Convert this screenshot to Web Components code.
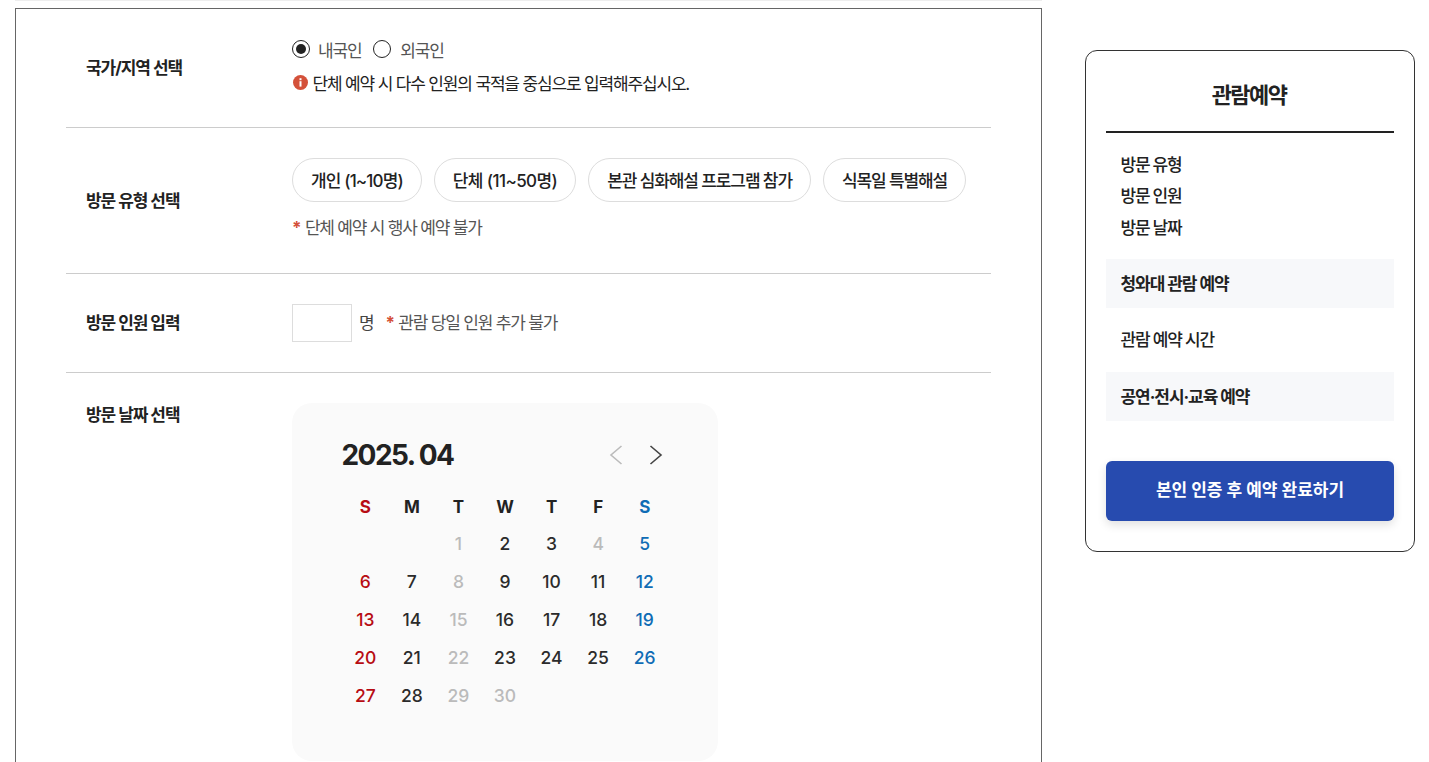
<!DOCTYPE html>
<html lang="ko">
<head>
<meta charset="utf-8">
<title>관람예약</title>
<style>
  html, body { margin: 0; height: 100%; overflow: hidden; background: #fff; }
  body { font-family: "Inter", "Noto Sans CJK KR", sans-serif; color: #222; }
</style>
</head>
<body>
<reserve-page>
  <reserve-form>
    <form-row label="국가/지역 선택" height="119" pad="0" center>
      <nation-picker></nation-picker>
    </form-row>
    <form-row label="방문 유형 선택" pad="0" height="146" center>
      <visit-types></visit-types>
    </form-row>
    <form-row label="방문 인원 입력" pad="30px 0" center>
      <people-input></people-input>
    </form-row>
    <form-row label="방문 날짜 선택" pad="30px 0 0" last>
      <date-calendar></date-calendar>
    </form-row>
  </reserve-form>
  <reserve-summary></reserve-summary>
</reserve-page>

<script>
const FONT = '"Inter", "Noto Sans CJK KR", sans-serif'

class ReservePage extends HTMLElement {
  constructor () {
    super()
    this.attachShadow({ mode: 'open' }).innerHTML = `
      <style>
        :host { display: flex; align-items: flex-start; padding: 8px 14px 0 15px; gap: 43px; box-sizing: border-box; width: 1429px; height: 762px; overflow: hidden; position: relative; }
        .strip { position: absolute; left: 15px; top: 0; width: 1027px; height: 1px; background: #eee; }
      </style>
      <div class="strip"></div>
      <slot></slot>
    `
  }
}

class ReserveForm extends HTMLElement {
  constructor () {
    super()
    this.attachShadow({ mode: 'open' }).innerHTML = `
      <style>
        :host { display: block; flex: none; width: 1027px; box-sizing: border-box; border: 1px solid #666; padding: 0 50px; height: 900px; }
      </style>
      <slot></slot>
    `
  }
}

class FormRow extends HTMLElement {
  constructor () {
    super()
    const center = this.hasAttribute('center')
    const last = this.hasAttribute('last')
    const height = this.getAttribute('height')
    this.attachShadow({ mode: 'open' }).innerHTML = `
      <style>
        :host { display: flex; align-items: ${center ? 'center' : 'flex-start'}; box-sizing: border-box; padding: ${this.getAttribute('pad')}; ${last ? '' : 'border-bottom: 1px solid #ccc;'} ${height ? `height: ${height + 'px'};` : ''} font-family: ${FONT}; }
        .label { flex: none; width: 226px; padding-left: 20px; box-sizing: border-box; font-size: 17px; font-weight: 700; letter-spacing: -1.05px; line-height: 24px; color: #222; }
        .value { flex: 1; min-width: 0; }
      </style>
      <div class="label">${this.getAttribute('label')}</div>
      <div class="value"><slot></slot></div>
    `
  }
}

class NationPicker extends HTMLElement {
  constructor () {
    super()
    this.attachShadow({ mode: 'open' }).innerHTML = `
      <style>
        :host { display: block; font-size: 17px; letter-spacing: -1.1px; color: #555; font-family: ${FONT}; margin-bottom: 5px; }
        .radios { display: flex; align-items: center; height: 24px; }
        .radio { display: flex; align-items: center; gap: 8px; margin-right: 11.5px; }
        .radio + .radio { gap: 9px; }
        .dot { width: 18px; height: 18px; box-sizing: border-box; border: 1px solid #222; border-radius: 50%; display: flex; align-items: center; justify-content: center; }
        .dot i { width: 10px; height: 10px; background: #222; border-radius: 50%; }
        .notice { display: flex; align-items: center; gap: 5px; margin-top: 9px; height: 24px; color: #222; letter-spacing: -1.16px; margin-left: 1px; }
        svg { display: block; margin-top: 1px; }
        .notice span { margin-left: -0.5px; }
      </style>
      <div class="radios">
        <div class="radio"><span class="dot"><i></i></span>내국인</div>
        <div class="radio"><span class="dot"></span>외국인</div>
      </div>
      <div class="notice">
        <svg width="15" height="15" viewBox="0 0 15 15"><circle cx="7.5" cy="7.5" r="7.5" fill="#d4513a"/><rect x="6.5" y="3.2" width="2" height="2" fill="#fff"/><rect x="6.5" y="6.2" width="2" height="5.4" fill="#fff"/></svg>
        <span>단체 예약 시 다수 인원의 국적을 중심으로 입력해주십시오.</span>
      </div>
    `
  }
}

class VisitTypes extends HTMLElement {
  constructor () {
    super()
    const types = [['개인 (1~10명)', '-0.86px'], ['단체 (11~50명)', '-0.6px'], ['본관 심화해설 프로그램 참가', '-1.1px'], ['식목일 특별해설', '-1.1px']]
    this.attachShadow({ mode: 'open' }).innerHTML = `
      <style>
        :host { display: block; font-family: ${FONT}; height: 85px; }
        .list { display: flex; gap: 12px; }
        .chip { height: 44px; box-sizing: border-box; border: 1px solid #ddd; border-radius: 22px; padding: 0 18px 2px; display: flex; align-items: center; font-size: 17px; font-weight: 500; color: #222; white-space: nowrap; }
        .note { margin-top: 14px; line-height: 24px; font-size: 17px; letter-spacing: -1.2px; color: #555; }
        .note b { color: #d4513a; font-weight: 700; margin-right: 1px; }
      </style>
      <div class="list">${types.map(t => `<div class="chip" style="letter-spacing: ${t[1]}">${t[0]}</div>`).join('')}</div>
      <div class="note"><b>*</b> 단체 예약 시 행사 예약 불가</div>
    `
  }
}

class PeopleInput extends HTMLElement {
  constructor () {
    super()
    this.attachShadow({ mode: 'open' }).innerHTML = `
      <style>
        :host { display: flex; align-items: center; font-family: ${FONT}; font-size: 17px; letter-spacing: -1.2px; color: #555; }
        .box { width: 60px; height: 38px; box-sizing: border-box; border: 1px solid #ddd; background: #fff; }
        span { margin-bottom: 3px; }
        .unit { margin-left: 7px; color: #444; }
        .note { margin-left: 12px; }
        .note b { color: #d4513a; font-weight: 700; margin-right: 1px; }
      </style>
      <div class="box"></div>
      <span class="unit">명</span>
      <span class="note"><b>*</b> 관람 당일 인원 추가 불가</span>
    `
  }
}

class DateCalendar extends HTMLElement {
  constructor () {
    super()
    const heads = ['S', 'M', 'T', 'W', 'T', 'F', 'S']
    const off = [1, 4, 8, 15, 22, 29, 30]
    let cells = '<i></i><i></i>'
    for (let d = 1; d <= 30; d++) {
      const col = (d + 1) % 7
      let cls = ''
      if (col === 0) cls = 'sun'
      if (col === 6) cls = 'sat'
      if (off.includes(d)) cls = 'off'
      cells += `<span class="${cls}">${d}</span>`
    }
    this.attachShadow({ mode: 'open' }).innerHTML = `
      <style>
        :host { display: block; width: 426px; height: 358px; box-sizing: border-box; background: #fafafa; border-radius: 20px; padding: 33px 50px 0; font-family: "Inter", sans-serif; }
        .top { display: flex; align-items: center; justify-content: space-between; height: 38px; }
        .ym { font-size: 28px; font-weight: 700; letter-spacing: -1.55px; color: #222; margin-left: -0.5px; }
        .nav { display: flex; gap: 26px; margin-right: 5px; }
        svg { display: block; }
        .grid { display: grid; grid-template-columns: repeat(7, 1fr); grid-auto-rows: 38px; margin-top: 13px; text-align: center; font-size: 17.5px; font-weight: 500; line-height: 38px; color: #2b2b2b; }
        .head { font-weight: 700; font-size: 17px; line-height: 40px; color: #222; }
        .sun { color: #b70c13; }
        .sat { color: #0f6cb5; }
        .off { color: #bbb; }
      </style>
      <div class="top">
        <div class="ym">2025. 04</div>
        <div class="nav">
          <svg width="14" height="20" viewBox="0 0 14 20" fill="none" stroke="#bbb" stroke-width="1.6"><path d="M12.5 1 2 10l10.500 9"/></svg>
          <svg width="14" height="20" viewBox="0 0 14 20" fill="none" stroke="#444" stroke-width="1.6"><path d="M1.5 1l10.500 9-10.500 9"/></svg>
        </div>
      </div>
      <div class="grid">
        ${heads.map((h, i) => `<span class="${i === 0 ? 'head sun' : i === 6 ? 'head sat' : 'head'}">${h}</span>`).join('')}
        ${cells}
      </div>
    `
  }
}

class ReserveSummary extends HTMLElement {
  constructor () {
    super()
    this.attachShadow({ mode: 'open' }).innerHTML = `
      <style>
        :host { display: block; flex: none; width: 330px; height: 502px; margin-top: 42px; box-sizing: border-box; border: 1px solid #333; border-radius: 12px; background: #fff; padding: 20px 20px 0; font-family: ${FONT}; color: #222; }
        h2 { margin: 0; height: 62px; line-height: 48px; padding-right: 2px; box-sizing: border-box; border-bottom: 2px solid #222; text-align: center; font-size: 22px; font-weight: 700; letter-spacing: -1.6px; }
        .list { padding: 16.75px 14.5px 14.25px; }
        .list div { font-size: 17px; font-weight: 500; letter-spacing: -1.25px; line-height: 31.5px; }
        .band { height: 49px; line-height: 51px; padding: 0 14.5px; background: #f7f8fa; font-size: 17px; font-weight: 700; letter-spacing: -1.05px; }
        .plain { height: 64px; line-height: 64px; padding: 0 14.5px; font-size: 17px; font-weight: 500; letter-spacing: -1.18px; }
        button { display: block; width: 100%; height: 60px; margin-top: 40px; padding: 0 0 5px; border: 0; border-radius: 6px; background: #274baf; color: #fff; font: 700 17px ${FONT}; letter-spacing: 0; box-shadow: 0 4px 10px rgba(0,0,0,.12); }
      </style>
      <h2>관람예약</h2>
      <div class="list"><div>방문 유형</div><div>방문 인원</div><div>방문 날짜</div></div>
      <div class="band">청와대 관람 예약</div>
      <div class="plain">관람 예약 시간</div>
      <div class="band">공연·전시·교육 예약</div>
      <button type="button">본인 인증 후 예약 완료하기</button>
    `
  }
}

customElements.define('reserve-page', ReservePage)
customElements.define('reserve-form', ReserveForm)
customElements.define('form-row', FormRow)
customElements.define('nation-picker', NationPicker)
customElements.define('visit-types', VisitTypes)
customElements.define('people-input', PeopleInput)
customElements.define('date-calendar', DateCalendar)
customElements.define('reserve-summary', ReserveSummary)
</script>
</body>
</html>
